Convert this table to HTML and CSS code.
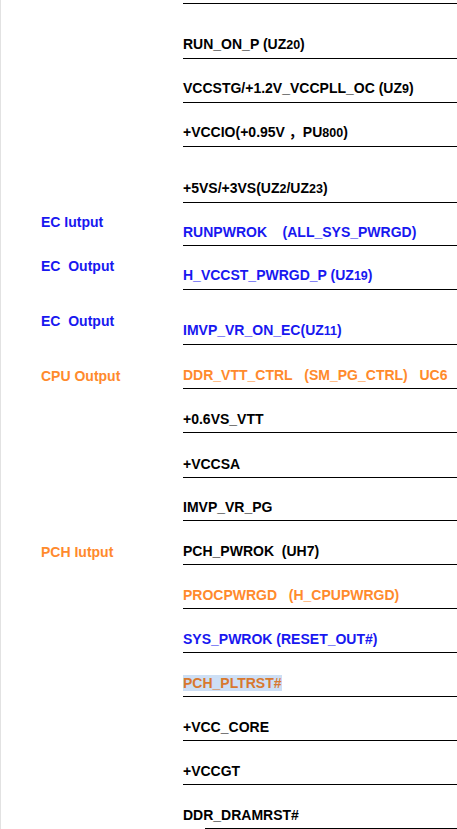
FILE: index.html
```html
<!DOCTYPE html>
<html>
<head>
<meta charset="utf-8">
<link rel="stylesheet" href="styles.css">
</head>
<body>
<div class="page">
  <div class="row top"><div class="label"></div><div class="value"></div></div>
  <div class="row h55"><div class="label"></div><div class="value"><span>RUN_ON_P (UZ<span class="sm">20</span>)</span></div></div>
  <div class="row"><div class="label"></div><div class="value"><span>VCCSTG/+1.2V_VCCPLL_OC (UZ<span class="sm">9</span>)</span></div></div>
  <div class="row"><div class="label"></div><div class="value"><span>+VCCIO(+0.95V&nbsp;，PU<span class="sm">800</span>)</span></div></div>
  <div class="row h56"><div class="label"></div><div class="value"><span>+5VS/+3VS(UZ<span class="sm">2</span>/UZ<span class="sm">23</span>)</span></div></div>
  <div class="row h43"><div class="label raised blue">EC Iutput</div><div class="value blue"><span>RUNPWROK&nbsp;&nbsp;&nbsp; (ALL_SYS_PWRGD)</span></div></div>
  <div class="row"><div class="label raised blue">EC&nbsp; Output</div><div class="value blue"><span>H_VCCST_PWRGD_P (UZ<span class="sm">19</span>)</span></div></div>
  <div class="row h55"><div class="label raised blue">EC&nbsp; Output</div><div class="value blue"><span>IMVP_VR_ON_EC(UZ<span class="sm">11</span>)</span></div></div>
  <div class="row"><div class="label orange">CPU Output</div><div class="value orange"><span>DDR_VTT_CTRL&nbsp;&nbsp; (SM_PG_CTRL)&nbsp;&nbsp; UC6</span></div></div>
  <div class="row"><div class="label"></div><div class="value"><span>+0.6VS_VTT</span></div></div>
  <div class="row h45"><div class="label"></div><div class="value"><span>+VCCSA</span></div></div>
  <div class="row h43"><div class="label"></div><div class="value"><span>IMVP_VR_PG</span></div></div>
  <div class="row"><div class="label orange">PCH Iutput</div><div class="value"><span>PCH_PWROK&nbsp; (UH7)</span></div></div>
  <div class="row"><div class="label"></div><div class="value orange"><span>PROCPWRGD&nbsp;&nbsp; (H_CPUPWRGD)</span></div></div>
  <div class="row"><div class="label"></div><div class="value blue"><span>SYS_PWROK (RESET_OUT#)</span></div></div>
  <div class="row"><div class="label"></div><div class="value"><span class="selected">PCH_PLTRST#</span></div></div>
  <div class="row"><div class="label"></div><div class="value"><span>+VCC_CORE</span></div></div>
  <div class="row"><div class="label"></div><div class="value"><span>+VCCGT</span></div></div>
  <div class="row last"><div class="label"></div><div class="value"><span>DDR_DRAMRST#</span></div></div>
</div>
</body>
</html>
```

FILE: styles.css
```css
html, body {
  margin: 0;
  padding: 0;
  background: #fff;
}

body {
  border-left: 1px solid #e2e2e2;
  font-family: "Liberation Sans", Arial, "Noto Sans CJK SC", sans-serif;
  font-weight: bold;
  font-size: 14px;
  line-height: 16px;
  color: #000;
  overflow: hidden;
  height: 829px;
  box-sizing: border-box;
}

.page {
  padding-left: 40px;
}

.row {
  display: grid;
  grid-template-columns: 142px 1fr;
  height: 44px;
}

.row.top { height: 4px; }
.row.h55 { height: 55px; }
.row.h56 { height: 56px; }
.row.h45 { height: 45px; }
.row.h43 { height: 43px; }

.label {
  align-self: end;
  padding-bottom: 5px;
  white-space: nowrap;
}

.label.raised {
  padding-bottom: 16px;
}

.value {
  box-sizing: border-box;
  border-bottom: 1px solid #000;
  display: flex;
  align-items: flex-end;
  padding-bottom: 5px;
  white-space: nowrap;
}

.row.top .label,
.row.top .value {
  padding-bottom: 0;
}

.row.last .value {
  border-bottom: none;
  flex-direction: column;
  align-items: flex-start;
  justify-content: flex-end;
  padding-bottom: 0;
}

.row.last .value::after {
  content: "";
  display: block;
  align-self: stretch;
  margin-left: 22px;
  margin-top: 5px;
  border-bottom: 1px solid #000;
}

.sm {
  font-size: 12.5px;
}

.blue { color: #1818f0; }
.orange { color: #ff8a2c; }

.selected {
  background: #cddff5;
  color: #d8782e;
}
```
